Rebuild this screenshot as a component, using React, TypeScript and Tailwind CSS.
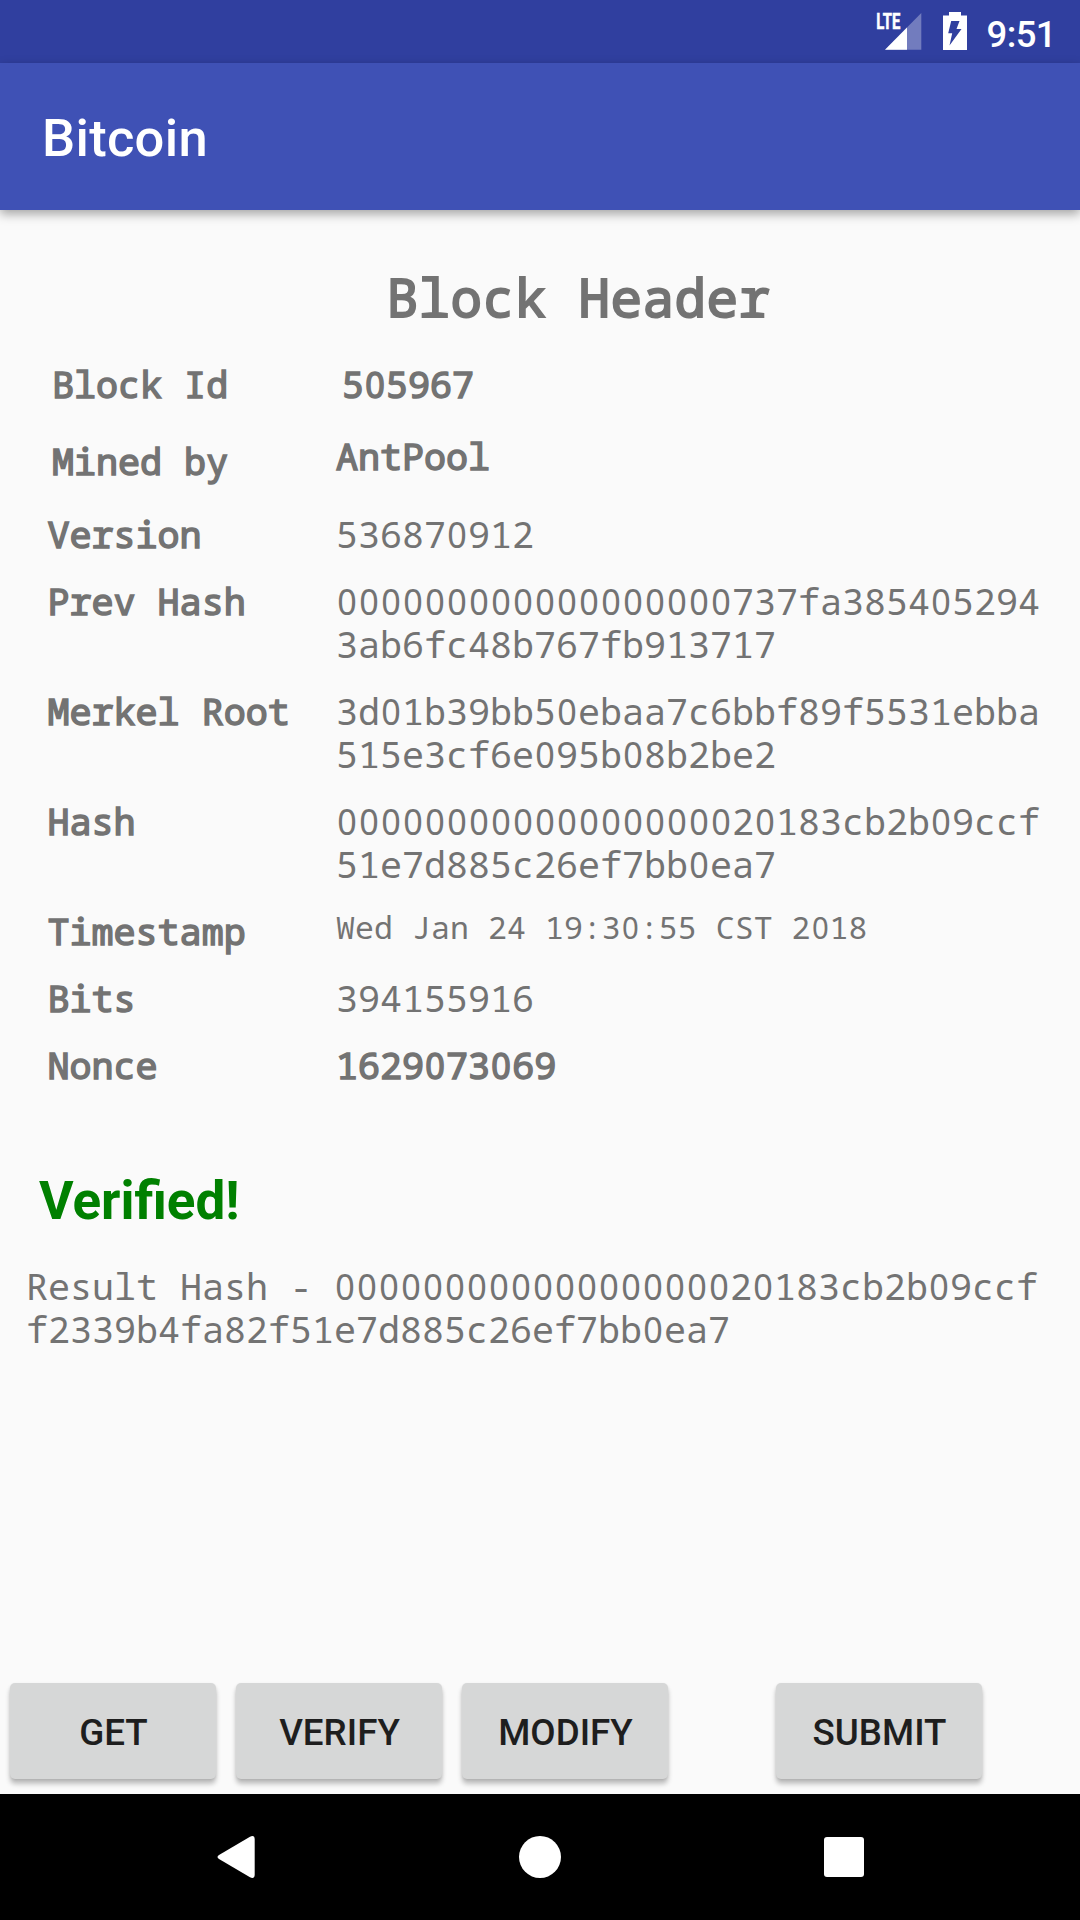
type MonoProps = { text: string; className?: string };

/* Monospaced text whose zeros are plain, without a slash; each zero keeps the width of one cell. */
function Mono({ text, className = "" }: MonoProps) {
  return (
    <span className={`block whitespace-pre font-['Noto_Sans_Mono',monospace] ${className}`}>
      {text.split("\n").map((line, row) => (
        <span key={row} className="block">
          {line.split(/(0+)/).map((part, i) =>
            part.startsWith("0") ? (
              <span
                key={i}
                style={{ width: `${part.length * 0.5987}em` }}
                className="inline-block origin-left scale-x-[0.93] pl-[0.036em] font-['Noto_Sans','Open_Sans',sans-serif] tracking-[0.0718em]"
              >
                {part}
              </span>
            ) : (
              part
            ),
          )}
        </span>
      ))}
    </span>
  );
}

const body = "text-[36.75px] leading-[43px] tracking-[-0.05px]";
const strong = "text-[36.75px] leading-[43px] tracking-[-0.03px] [-webkit-text-stroke:1.5px_#737373]";
const small = "-mt-[2px] text-[31.5px] leading-[37px] tracking-[0.09px]";

const rows = [
  { label: "Version", value: "536870912", style: body },
  { label: "Prev Hash", value: "000000000000000000737fa385405294\n3ab6fc48b767fb913717", style: body },
  { label: "Merkel Root", value: "3d01b39bb50ebaa7c6bbf89f5531ebba\n515e3cf6e095b08b2be2", style: body },
  { label: "Hash", value: "00000000000000000020183cb2b09ccf\n51e7d885c26ef7bb0ea7", style: body },
  { label: "Timestamp", value: "Wed Jan 24 19:30:55 CST 2018", style: small },
  { label: "Bits", value: "394155916", style: body },
  { label: "Nonce", value: "1629073069", style: strong },
];

function StatusBar() {
  return (
    <div className="flex h-[63px] items-start justify-end bg-[#303f9f] pr-[24px] text-white">
      <svg className="mt-[10px] h-[42px] w-[48px]" viewBox="0 0 48 42">
        <path d="M9 39.7 45.3 3v36.7z" fill="#fff" opacity=".32" />
        <path d="M9 39.7 31 17.5v22.2z" fill="#fff" />
        <path d="M0 0h24.5v20.5H0z" fill="#303f9f" />
        <text x="0.3" y="19" fontSize="21.5" fontWeight="700" textLength="24" lengthAdjust="spacingAndGlyphs" fill="#fff" stroke="#fff" strokeWidth="0.5" fontFamily="Roboto, sans-serif">LTE</text>
      </svg>
      <svg className="ml-[19px] mt-[12px] h-[38px] w-[24px]" viewBox="0 0 24 38">
        <path d="M6 0h12v3.5h6V38H0V3.5h6z" fill="#fff" />
        <path d="M8.2 9h8.3l-3 8h5L6.5 33.5l2.7-12.2h-4z" fill="#303f9f" />
      </svg>
      <span className="ml-[20px] mt-[13px] text-[36.5px] leading-[43px] font-medium tracking-[-0.6px]">9:51</span>
    </div>
  );
}

function ActionButton({ label, className = "" }: { label: string; className?: string }) {
  return (
    <button
      className={`h-[96px] w-[206px] rounded-[5px] bg-[#d6d7d7] pt-[3px] pl-px text-center text-[36.75px] leading-[43px] font-medium text-[#1e1e1e] shadow-[0_5px_5px_rgba(0,0,0,0.24),0_1px_3px_rgba(0,0,0,0.1)] ${className}`}
    >
      {label}
    </button>
  );
}

export default function App() {
  return (
    <div className="flex h-[1920px] w-[1080px] flex-col overflow-hidden bg-[#fafafa] font-['Roboto',sans-serif] text-[#737373]">
      <StatusBar />
      <header className="flex h-[147px] items-center bg-[#3f51b5] pt-[2px] pl-[42px] shadow-[0_4px_10px_rgba(0,0,0,0.35)]">
        <h1 className="text-[52.5px] leading-[62px] font-medium tracking-[0.3px] text-white">Bitcoin</h1>
      </header>

      <main className="flex flex-1 flex-col">
        <Mono
          text="Block Header"
          className="mt-[56px] pl-[386.5px] text-[52.5px] leading-[62px] tracking-[0.5px] [-webkit-text-stroke:2px_#737373]"
        />
        <div className="mt-[35px] flex pl-[52px]">
          <Mono text="Block Id" className={`w-[290px] ${strong}`} />
          <Mono text="505967" className={strong} />
        </div>
        <div className="mt-[29px] flex pl-[52px]">
          <Mono text="Mined by" className={`mt-[5px] w-[284px] ${strong}`} />
          <Mono text="AntPool" className={strong} />
        </div>

        <div className="mt-[30px] flex flex-col gap-[24px] pl-[47.5px]">
          {rows.map((row) => (
            <div key={row.label} className="flex">
              <Mono text={row.label} className={`w-[288.5px] ${strong}`} />
              <Mono text={row.value} className={row.style} />
            </div>
          ))}
        </div>

        <p className="mt-[83px] pl-[39px] text-[53px] leading-[62px] font-bold text-[#008000]">Verified!</p>
        <Mono
          text={"Result Hash - 00000000000000000020183cb2b09ccf\nf2339b4fa82f51e7d885c26ef7bb0ea7"}
          className={`mt-[33px] pl-[26px] ${body}`}
        />

        <div className="mt-auto flex gap-[20px] pb-[15px] pl-[10px]">
          <ActionButton label="GET" />
          <ActionButton label="VERIFY" />
          <ActionButton label="MODIFY" />
          <ActionButton label="SUBMIT" className="ml-[88px]" />
        </div>
      </main>

      <nav className="flex h-[126px] items-start bg-black pt-[42px] pl-[217px]">
        <svg className="h-[42px] w-[38px]" viewBox="0 0 38 42">
          <path d="M2 19 33 .7Q37.7-1.3 37.7 3.5v35Q37.7 43.3 33 41.3L2 23q-3-2 0-4z" fill="#fff" />
        </svg>
        <span className="ml-[264px] h-[42px] w-[42px] rounded-full bg-white" />
        <span className="ml-[263px] mt-[1px] h-[40px] w-[40px] rounded-[3px] bg-white" />
      </nav>
    </div>
  );
}
